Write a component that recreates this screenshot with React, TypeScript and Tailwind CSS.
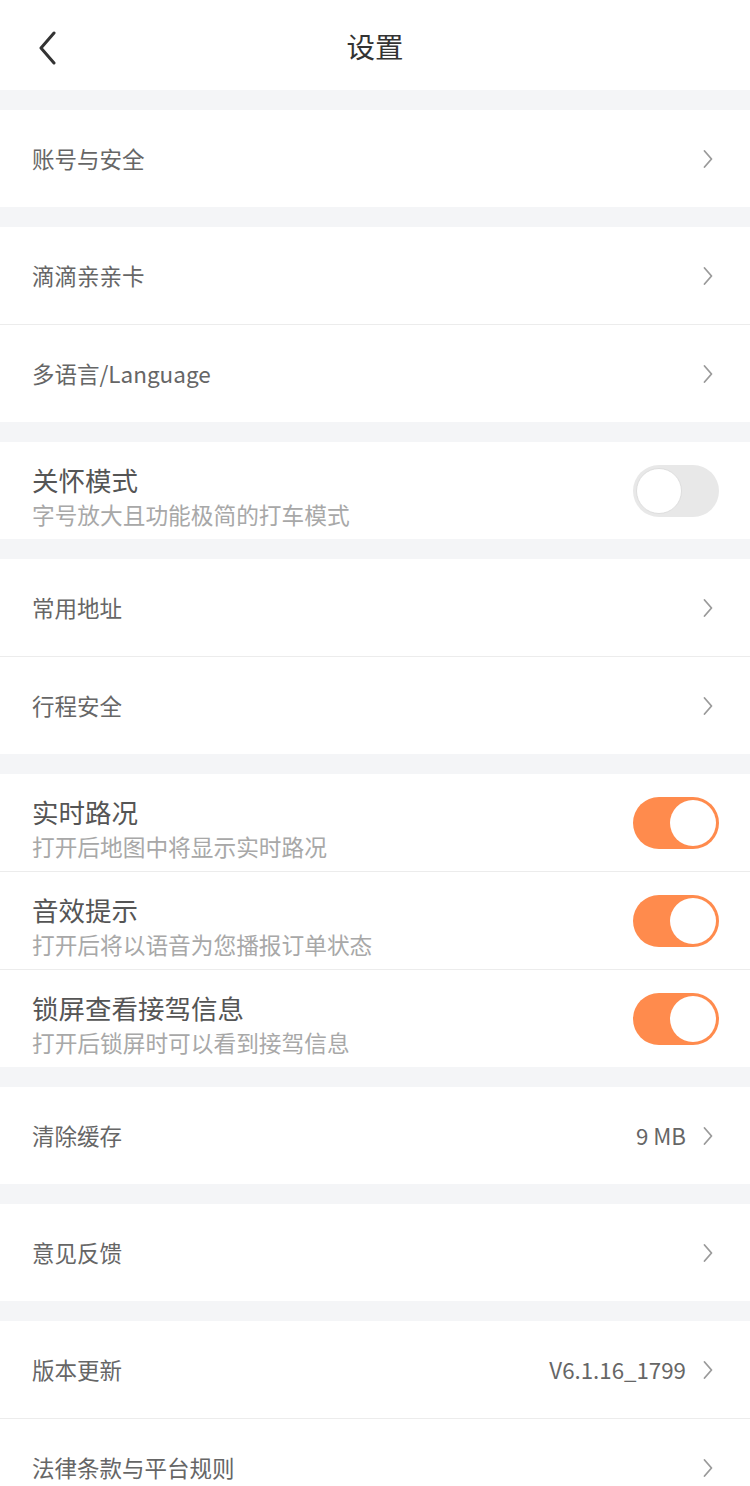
import type { ReactNode } from "react";

// Settings page: header, grouped rows with chevrons and toggles.

const FONT = "font-['Noto_Sans_CJK_SC','Noto_Sans',sans-serif]";

function Chevron() {
  return (
    <svg width="12" height="20" viewBox="0 0 12 20" className="shrink-0">
      <path
        d="M2.5 2 L9.5 10 L2.5 18"
        fill="none"
        stroke="#9a9a9a"
        strokeWidth="1.8"
        strokeLinecap="round"
        strokeLinejoin="round"
      />
    </svg>
  );
}

function Toggle({ on }: { on: boolean }) {
  return (
    <div
      className={
        on
          ? "flex h-[52px] w-[86px] items-center justify-end rounded-full bg-[#ff8b4d] px-[3px]"
          : "flex h-[52px] w-[86px] items-center justify-start rounded-full bg-[#e8e8e8] px-[3px]"
      }
    >
      <div
        className={
          on
            ? "h-[46px] w-[46px] rounded-full bg-white"
            : "h-[46px] w-[46px] rounded-full border border-[#dedede] bg-white"
        }
      />
    </div>
  );
}

function Row({
  label,
  value,
  divider,
}: {
  label: string;
  value?: string;
  divider?: boolean;
}) {
  return (
    <div
      className={
        divider
          ? "flex h-[98px] items-center border-t border-[#ececec] pl-[32px] pr-[36px]"
          : "flex h-[97px] items-center pl-[32px] pr-[36px]"
      }
    >
      <span className="flex-1 text-[22.5px] text-[#666666]">{label}</span>
      {value && (
        <span className="mr-[16px] text-[22.3px] text-[#666666]">{value}</span>
      )}
      <Chevron />
    </div>
  );
}

function ToggleRow({
  title,
  sub,
  on,
  divider,
}: {
  title: string;
  sub: string;
  on: boolean;
  divider?: boolean;
}) {
  return (
    <div
      className={
        divider
          ? "flex h-[98px] items-start border-t border-[#ececec] pl-[32px] pr-[31px]"
          : "flex h-[97px] items-start pl-[32px] pr-[31px]"
      }
    >
      <div className="flex flex-1 flex-col pt-[21px]">
        <span className="text-[26.5px] leading-[34px] text-[#555555]">
          {title}
        </span>
        <span className="mt-[2px] text-[22.7px] leading-[32px] text-[#a8a8a8]">
          {sub}
        </span>
      </div>
      <div className="pt-[23px]">
        <Toggle on={on} />
      </div>
    </div>
  );
}

function Group({ children }: { children: ReactNode }) {
  return <div className="mt-[20px] bg-white">{children}</div>;
}

export default function App() {
  return (
    <div className={`min-h-[1486px] w-[750px] bg-[#f4f5f7] ${FONT}`}>
      <div className="relative flex h-[90px] items-center justify-center bg-white pt-[3px]">
        <svg
          width="24"
          height="34"
          viewBox="0 0 24 34"
          className="absolute left-[36px] top-[31px]"
        >
          <path
            d="M18 2 L5 17 L18 32"
            fill="none"
            stroke="#333333"
            strokeWidth="3"
            strokeLinecap="round"
            strokeLinejoin="round"
          />
        </svg>
        <span className="text-[28.5px] text-[#333333]">设置</span>
      </div>

      <Group>
        <Row label="账号与安全" />
      </Group>

      <Group>
        <Row label="滴滴亲亲卡" />
        <Row label="多语言/Language" divider />
      </Group>

      <Group>
        <ToggleRow title="关怀模式" sub="字号放大且功能极简的打车模式" on={false} />
      </Group>

      <Group>
        <Row label="常用地址" />
        <Row label="行程安全" divider />
      </Group>

      <Group>
        <ToggleRow title="实时路况" sub="打开后地图中将显示实时路况" on />
        <ToggleRow title="音效提示" sub="打开后将以语音为您播报订单状态" on divider />
        <ToggleRow
          title="锁屏查看接驾信息"
          sub="打开后锁屏时可以看到接驾信息"
          on
          divider
        />
      </Group>

      <Group>
        <Row label="清除缓存" value="9 MB" />
      </Group>

      <Group>
        <Row label="意见反馈" />
      </Group>

      <Group>
        <Row label="版本更新" value="V6.1.16_1799" />
        <Row label="法律条款与平台规则" divider />
      </Group>
    </div>
  );
}
